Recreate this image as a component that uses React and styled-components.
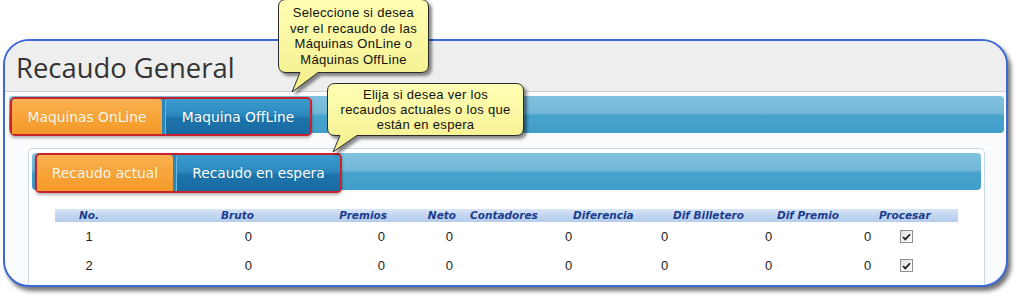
import React from "react";
import styled, { createGlobalStyle } from "styled-components";

const Global = createGlobalStyle`
  html, body { margin: 0; padding: 0; background: #ffffff; }
  * { box-sizing: border-box; }
`;

const Stage = styled.div`
  position: relative;
  width: 1017px;
  height: 296px;
  overflow: hidden;
  padding: 39px 0 0 3px;
  background: #ffffff;
`;

const Frame = styled.div`
  width: 1005px;
  height: 248px;
  border: 2px solid #3d69d8;
  border-radius: 26px;
  overflow: hidden;
  background: #f9fbfc;
  box-shadow: 3px 4px 4px rgba(0, 0, 0, 0.55);
  display: flex;
  flex-direction: column;
`;

const Header = styled.div`
  height: 50px;
  flex: none;
  background: #eeeeee;
  padding: 9px 0 0 11px;
`;

const Title = styled.h1`
  margin: 0;
  font-family: "Open Sans", "DejaVu Sans", sans-serif;
  font-weight: 400;
  font-size: 27.4px;
  line-height: 36px;
  color: #333333;
`;

const Body = styled.div`
  flex: 1;
  border-top: 1px solid #c9d0d6;
  padding: 4px 2px 0 4px;
  display: flex;
  flex-direction: column;
  min-height: 0;
`;

const TabBar = styled.div`
  flex: none;
  height: 37px;
  border-radius: 4px;
  background: linear-gradient(
    to bottom,
    #80c1df 0%,
    #73b8d8 46%,
    #47a3cc 53%,
    #409ec9 100%
  );
  display: flex;
  align-items: flex-start;
  padding: ${(p) => p.$pad};
`;

const TabGroup = styled.div`
  display: flex;
  gap: 3px;
  border: 2px solid #c9202c;
  border-radius: 5px;
  box-shadow: 0 2px 3px rgba(0, 0, 0, 0.3);
  background: #2a86bb;
`;

const Tab = styled.div`
  width: ${(p) => p.$w}px;
  height: ${(p) => p.$h}px;
  display: flex;
  align-items: center;
  justify-content: center;
  font-family: "DejaVu Sans", Verdana, sans-serif;
  font-size: 13.8px;
  color: ${(p) => (p.$active ? "#fffbea" : "#ffffff")};
  border-radius: 3px 3px 0 0;
  background: ${(p) =>
    p.$active
      ? "linear-gradient(to bottom, #fbb052 0%, #f8a53a 50%, #f49a28 100%)"
      : "linear-gradient(to bottom, #3c9dce 0%, #2a87bd 48%, #1c74ab 55%, #186aa1 100%)"};
  border-left: ${(p) => (p.$active ? "none" : "1px solid #6cb9e0")};
  text-shadow: 0 0 1px rgba(0, 0, 0, 0.15);
`;

const Panel = styled.div`
  flex: 1;
  margin: 15px 19px 0 19px;
  border: 1px solid #c7dae8;
  border-bottom: none;
  border-radius: 5px 5px 0 0;
  background: #ffffff;
  padding: 4px 3px 0 3px;
`;

const Table = styled.div`
  margin: 19px 0 0 23px;
  width: 903px;
`;

const Row = styled.div`
  display: grid;
  grid-template-columns: 68px 135px 133px 71px 91px 102px 105px 100px 98px;
  height: ${(p) => p.$h}px;
  align-items: center;
  background: ${(p) =>
    p.$head ? "linear-gradient(to bottom, #d8e5f6 0%, #c1d6f0 50%, #b5ccec 100%)" : "transparent"};
`;

const HeadCell = styled.div`
  font-family: "DejaVu Sans", Verdana, sans-serif;
  font-weight: 700;
  font-style: italic;
  font-size: 10.5px;
  line-height: 13px;
  color: #1b3c8e;
  white-space: nowrap;
  text-align: ${(p) => p.$align};
  padding-left: ${(p) => (p.$align === "left" ? p.$pad : 0)}px;
  padding-right: ${(p) => (p.$align === "right" ? p.$pad : 0)}px;
`;

const Cell = styled.div`
  font-family: "Liberation Sans", Arial, sans-serif;
  font-size: 13px;
  color: #222222;
  white-space: nowrap;
  display: flex;
  align-items: center;
  gap: ${(p) => p.$gap || 0}px;
  justify-content: ${(p) =>
    p.$align === "right" ? "flex-end" : p.$align === "center" ? "center" : "flex-start"};
  padding-left: ${(p) => (p.$align === "left" ? p.$pad : 0)}px;
  padding-right: ${(p) => (p.$align === "right" ? p.$pad : 0)}px;
`;

const Check = styled.span`
  width: 13px;
  height: 13px;
  border: 1px solid #8f9090;
  background: linear-gradient(135deg, #dcdcdc 0%, #f6f6f6 60%, #ffffff 100%);
  display: inline-flex;
  align-items: center;
  justify-content: center;
`;

const CalloutBox = styled.div`
  position: absolute;
  left: ${(p) => p.$left}px;
  top: ${(p) => p.$top}px;
  width: ${(p) => p.$w}px;
  z-index: 5;
`;

const CalloutShape = styled.svg`
  position: absolute;
  left: 0;
  top: 0;
  overflow: visible;
  filter: drop-shadow(3px 3px 1.5px rgba(0, 0, 0, 0.45));
`;

const CalloutText = styled.div`
  position: relative;
  height: ${(p) => p.$h}px;
  display: flex;
  align-items: center;
  justify-content: center;
  text-align: center;
  font-family: "Liberation Sans", Arial, sans-serif;
  font-size: 13px;
  letter-spacing: 0.3px;
  line-height: ${(p) => p.$lh}px;
  color: #111111;
`;

function Callout({ left, top, w, h, tail, lh, children, id }) {
  const r = 8;
  const [b1, b2, tx, ty] = tail;
  const d = `M ${r} 0.5 H ${w - r} Q ${w - 0.5} 0.5 ${w - 0.5} ${r} V ${h - r} Q ${w - 0.5} ${
    h - 0.5
  } ${w - r} ${h - 0.5} H ${b2} L ${tx} ${ty} L ${b1} ${h - 0.5} H ${r} Q 0.5 ${h - 0.5} 0.5 ${
    h - r
  } V ${r} Q 0.5 0.5 ${r} 0.5 Z`;
  return (
    <CalloutBox $left={left} $top={top} $w={w}>
      <CalloutShape width={w} height={ty + 2} viewBox={`0 0 ${w} ${ty + 2}`}>
        <defs>
          <linearGradient id={id} x1="0" y1="0" x2="0" y2="1">
            <stop offset="0" stopColor="#ffffb4" />
            <stop offset="1" stopColor="#f3ee8c" />
          </linearGradient>
        </defs>
        <path d={d} fill={`url(#${id})`} stroke="#2a2a2a" strokeWidth="1" />
      </CalloutShape>
      <CalloutText $h={h} $lh={lh}>
        <div>{children}</div>
      </CalloutText>
    </CalloutBox>
  );
}

const CheckMark = () => (
  <svg width="9" height="8" viewBox="0 0 9 8">
    <path d="M1 4 L3.3 6.4 L8 1.2" fill="none" stroke="#1a1a1a" strokeWidth="1.7" />
  </svg>
);

const headers = [
  ["No.", "center", 0],
  ["Bruto", "right", 4],
  ["Premios", "right", 4],
  ["Neto", "right", 6],
  ["Contadores", "left", 8],
  ["Diferencia", "left", 20],
  ["Dif Billetero", "left", 18],
  ["Dif Premio", "left", 17],
  ["Procesar", "left", 19],
];

const rows = [1, 2];

export default function App() {
  return (
    <>
      <Global />
      <Stage>
        <Frame>
          <Header>
            <Title>Recaudo General</Title>
          </Header>
          <Body>
            <TabBar $pad="1px 0 0 1px">
              <TabGroup>
                <Tab $active $w={150} $h={35}>Maquinas OnLine</Tab>
                <Tab $w={145} $h={35}>Maquina OffLine</Tab>
              </TabGroup>
            </TabBar>
            <Panel>
              <TabBar $pad="0 0 0 3px">
                <TabGroup>
                  <Tab $active $w={136} $h={36}>Recaudo actual</Tab>
                  <Tab $w={164} $h={36}>Recaudo en espera</Tab>
                </TabGroup>
              </TabBar>
              <Table>
                <Row $head $h={13}>
                  {headers.map(([t, a, p]) => (
                    <HeadCell key={t} $align={a} $pad={p}>
                      {t}
                    </HeadCell>
                  ))}
                </Row>
                {rows.map((n) => (
                  <Row key={n} $h={29}>
                    <Cell $align="center">{n}</Cell>
                    <Cell $align="right" $pad={6}>0</Cell>
                    <Cell $align="right" $pad={6}>0</Cell>
                    <Cell $align="right" $pad={9}>0</Cell>
                    <Cell $align="left" $pad={0}></Cell>
                    <Cell $align="left" $pad={12}>0</Cell>
                    <Cell $align="left" $pad={6}>0</Cell>
                    <Cell $align="left" $pad={5}>0</Cell>
                    <Cell $align="left" $pad={4} $gap={29}>
                      0
                      <Check>
                        <CheckMark />
                      </Check>
                    </Cell>
                  </Row>
                ))}
              </Table>
            </Panel>
          </Body>
        </Frame>
        <Callout id="c1" left={278} top={-1} w={151} h={74} lh={15.5} tail={[22, 40, 14, 93]}>
          Seleccione si desea
          <br />
          ver el recaudo de las
          <br />
          Máquinas OnLine o
          <br />
          Máquinas OffLine
        </Callout>
        <Callout id="c2" left={327} top={83} w={197} h={53} lh={15} tail={[13, 30, 6, 69]}>
          Elija si desea ver los
          <br />
          recaudos actuales o los que
          <br />
          están en espera
        </Callout>
      </Stage>
    </>
  );
}
